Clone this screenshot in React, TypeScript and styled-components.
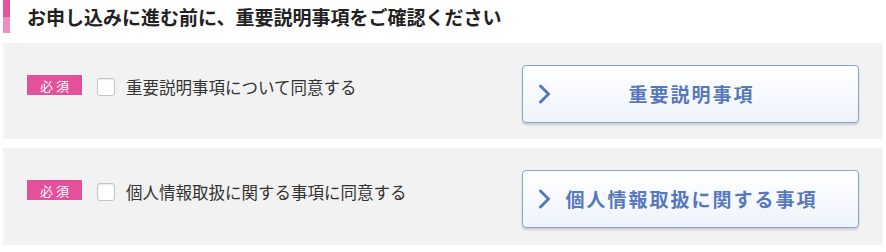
import styled, { createGlobalStyle } from 'styled-components';

const GlobalStyle = createGlobalStyle`
  html, body {
    margin: 0;
    padding: 0;
    background: #ffffff;
  }
  body {
    font-family: "Noto Sans CJK JP", "Noto Sans", sans-serif;
    color: #333333;
  }
`;

const StyledWrapper = styled.div`
  width: 886px;
  padding: 0 3px 0 3px;
  box-sizing: border-box;
`;

const StyledHeading = styled.h2`
  display: flex;
  align-items: center;
  height: 33px;
  margin: 0 0 10px;
  padding-left: 17px;
  border-left: 7px solid #e4569e;
  border-image: linear-gradient(to bottom, #e2539b 0%, #e2539b 50%, #f08dc1 50%, #f08dc1 100%) 1;
  font-size: 19px;
  font-weight: 700;
  line-height: 1;
  color: #222222;
`;

const StyledPanel = styled.section<{ $bottom: number }>`
  display: flex;
  justify-content: space-between;
  align-items: flex-start;
  background: #f2f2f2;
  padding: 22px 24px ${({ $bottom }) => $bottom}px 24px;
  margin-bottom: 9px;
`;

const StyledAgree = styled.label`
  display: flex;
  align-items: center;
  margin-top: 9px;
  cursor: pointer;
`;

const StyledBadge = styled.span`
  display: inline-flex;
  align-items: center;
  justify-content: center;
  flex-shrink: 0;
  width: 55px;
  height: 20px;
  background: #e4519b;
  color: #ffffff;
  font-size: 13px;
  letter-spacing: 3px;
  padding-left: 3px;
  box-sizing: border-box;
  line-height: 1;
`;

const StyledCheckbox = styled.input.attrs({ type: 'checkbox' })`
  appearance: none;
  -webkit-appearance: none;
  display: block;
  flex-shrink: 0;
  width: 18px;
  height: 18px;
  min-width: 18px;
  margin: 4px 11px 0 15px;
  padding: 0;
  background: #ffffff;
  border: 1px solid #c4c4c4;
  border-radius: 3px;
  box-shadow: inset 0 1px 1px rgba(0, 0, 0, 0.08);
  box-sizing: border-box;
`;

const StyledLabelText = styled.span`
  font-size: 16.5px;
  color: #333333;
  line-height: 1;
  margin-top: 5px;
`;

const StyledLinkButton = styled.button`
  position: relative;
  display: flex;
  align-items: center;
  justify-content: center;
  width: 337px;
  height: 58px;
  border: 1px solid #8aa1cc;
  border-radius: 4px;
  background: linear-gradient(to bottom, #ffffff 0%, #eef3fc 100%);
  box-shadow: 0 2px 2px rgba(80, 100, 140, 0.25);
  font-family: "Noto Sans CJK JP", "Noto Sans", sans-serif;
  font-size: 19px;
  font-weight: 700;
  letter-spacing: 2px;
  color: #5878bd;
  cursor: pointer;
  padding: 0 0 2px 2px;
`;

const StyledChevron = styled.svg`
  position: absolute;
  left: 15px;
  top: 18px;
  width: 13px;
  height: 20px;
`;

const Chevron = () => (
  <StyledChevron viewBox="0 0 13 20">
    <path d="M2.5 2 L10.5 10 L2.5 18" fill="none" stroke="#5878bd" strokeWidth="3" strokeLinecap="round" strokeLinejoin="round" />
  </StyledChevron>
);

const items = [
  { label: '重要説明事項について同意する', button: '重要説明事項', bottom: 16 },
  { label: '個人情報取扱に関する事項に同意する', button: '個人情報取扱に関する事項', bottom: 17 },
];

const App = () => {
  return (
    <>
      <GlobalStyle />
      <StyledWrapper>
        <StyledHeading>お申し込みに進む前に、重要説明事項をご確認ください</StyledHeading>
        {items.map((item) => (
          <StyledPanel key={item.button} $bottom={item.bottom}>
            <StyledAgree>
              <StyledBadge>必須</StyledBadge>
              <StyledCheckbox />
              <StyledLabelText>{item.label}</StyledLabelText>
            </StyledAgree>
            <StyledLinkButton type="button">
              <Chevron />
              {item.button}
            </StyledLinkButton>
          </StyledPanel>
        ))}
      </StyledWrapper>
    </>
  );
};

export default App;
